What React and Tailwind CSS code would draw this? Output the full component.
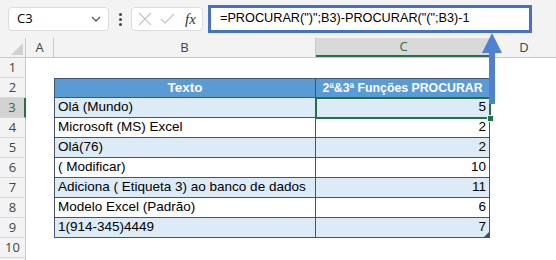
import React from "react";

const data = [
  ["Olá (Mundo)", 5],
  ["Microsoft (MS) Excel", 2],
  ["Olá(76)", 2],
  ["( Modificar)", 10],
  ["Adiciona ( Etiqueta 3) ao banco de dados", 11],
  ["Modelo Excel (Padrão)", 6],
  ["1(914-345)4449", 7],
];

function RowHeader({ n, active }) {
  return (
    <div
      className={
        "w-[26px] h-[20px] shrink-0 flex items-center justify-center border-b border-[#d9d9d9] text-[13px] " +
        (active
          ? "bg-[#d2d2d2] border-r-2 border-r-[#217346] text-[#217346]"
          : "bg-[#f3f3f3] border-r border-r-[#c8c8c8] text-[#444]")
      }
      style={{ fontFamily: "'Open Sans', 'Noto Sans', sans-serif" }}
    >
      {n}
    </div>
  );
}

export default function App() {
  return (
    <div
      className="relative w-[556px] h-[260px] bg-white overflow-hidden"
      style={{ fontFamily: "'Liberation Sans', Arial, sans-serif" }}
    >
      {/* Top bar */}
      <div className="h-[38px] bg-[#f3f3f3] flex items-center pl-[8px]">
        <div className="w-[101px] h-[24px] bg-white border border-[#dcdcdc] rounded-[4px] flex items-center justify-between pl-[8px] pr-[6px]">
          <span className="text-[13px] text-black" style={{ fontFamily: "'Open Sans', sans-serif" }}>C3</span>
          <svg width="12" height="8" viewBox="0 0 12 8">
            <path d="M2 2 L6 6 L10 2" fill="none" stroke="#555" strokeWidth="1.3" />
          </svg>
        </div>
        <div className="w-[22px] flex flex-col items-center justify-center gap-[2px]">
          <div className="w-[3px] h-[3px] rounded-full bg-[#444]" />
          <div className="w-[3px] h-[3px] rounded-full bg-[#444]" />
          <div className="w-[3px] h-[3px] rounded-full bg-[#444]" />
        </div>
        <div className="w-[72px] h-[24px] bg-white border border-[#dcdcdc] rounded-[4px] flex items-center pl-[6px] gap-[8px]">
          <svg width="14" height="14" viewBox="0 0 14 14">
            <path d="M1 1 L13 13 M13 1 L1 13" stroke="#c4c4c4" strokeWidth="1.2" />
          </svg>
          <svg width="15" height="12" viewBox="0 0 15 12">
            <path d="M1 6 L5 10 L14 1" fill="none" stroke="#c4c4c4" strokeWidth="1.2" />
          </svg>
          <span
            className="text-[15px] italic text-[#333] ml-[2px]"
            style={{ fontFamily: "'Liberation Serif', 'DejaVu Serif', serif" }}
          >
            fx
          </span>
        </div>
        <div className="ml-[5px] w-[324px] h-[28px] bg-white border-[3px] border-[#4472c4] flex items-center pl-[9px] text-[12.7px] text-black whitespace-nowrap">
          =PROCURAR(")";B3)-PROCURAR("(";B3)-1
        </div>
      </div>

      {/* Column headers */}
      <div
        className="flex h-[20px] bg-[#f3f3f3] border-b border-[#c8c8c8] text-[13px] text-[#444]"
        style={{ fontFamily: "'Open Sans', 'Noto Sans', sans-serif" }}
      >
        <div className="relative w-[26px] shrink-0 border-r border-[#c8c8c8]">
          <svg className="absolute right-[2px] bottom-[2px]" width="12" height="12" viewBox="0 0 12 12">
            <polygon points="12,0 12,12 0,12" fill="#d0d0d0" />
          </svg>
        </div>
        <div className="w-[28px] shrink-0 border-r border-[#c8c8c8] flex items-center justify-center">A</div>
        <div className="w-[262px] shrink-0 border-r border-[#c8c8c8] flex items-center justify-center">B</div>
        <div className="w-[175px] shrink-0 bg-[#d9d9d9] border-b-2 border-[#217346] text-[#217346] flex items-center justify-center">C</div>
        <div className="flex-1 border-l border-[#c8c8c8] flex items-center justify-center">D</div>
      </div>

      {/* Row 1 */}
      <div className="flex h-[20px]">
        <RowHeader n={1} />
      </div>

      {/* Row 2 header */}
      <div className="flex h-[20px]">
        <RowHeader n={2} />
        <div className="w-[28px] shrink-0" />
        <div className="w-[262px] shrink-0 bg-[#5b9bd5] border border-[#44546a] flex items-center justify-center text-white font-bold text-[13.5px]">
          Texto
        </div>
        <div className="w-[174px] shrink-0 bg-[#5b9bd5] border-y border-r border-[#44546a] flex items-center justify-center text-white font-bold text-[12.3px] whitespace-nowrap">
          2ª&amp;3ª Funções PROCURAR
        </div>
      </div>

      {data.map(([t, v], i) => {
        const band = i % 2 === 0 ? "bg-[#ddebf7]" : "bg-white";
        return (
          <div key={i} className="flex h-[20px]">
            <RowHeader n={i + 3} active={i === 0} />
            <div className="w-[28px] shrink-0" />
            <div className={"w-[262px] shrink-0 border-x border-b border-[#44546a] flex items-center pl-[3px] text-[13.5px] text-black whitespace-nowrap " + band}>
              {t}
            </div>
            <div className={"w-[174px] shrink-0 border-r border-b border-[#44546a] flex items-center justify-end pr-[3px] text-[13.5px] text-black " + band}>
              {v}
            </div>
          </div>
        );
      })}

      {/* Row 10 */}
      <div className="flex h-[20px]">
        <RowHeader n={10} />
      </div>
      <div className="flex h-[2px]">
        <div className="w-[26px] shrink-0 bg-[#f3f3f3] border-r border-[#c8c8c8]" />
      </div>

      {/* Selection C3 */}
      <div className="absolute left-[315px] top-[97px] w-[176px] h-[22px] border-2 border-[#217346]" />
      <div className="absolute left-[487px] top-[115px] w-[7px] h-[7px] bg-[#217346] border border-white" />

      {/* Table resize handle */}
      <svg className="absolute left-[484px] top-[232px]" width="5" height="5" viewBox="0 0 5 5">
        <polygon points="5,0 5,5 0,5" fill="#3b4e87" />
      </svg>

      {/* Arrow */}
      <svg className="absolute left-[480px] top-[32px]" width="24" height="74" viewBox="0 0 24 74">
        <polygon points="12,1 2,21 22,21" fill="#4f81d0" />
        <rect x="9" y="20" width="6" height="52" fill="#4f81d0" />
      </svg>
    </div>
  );
}
